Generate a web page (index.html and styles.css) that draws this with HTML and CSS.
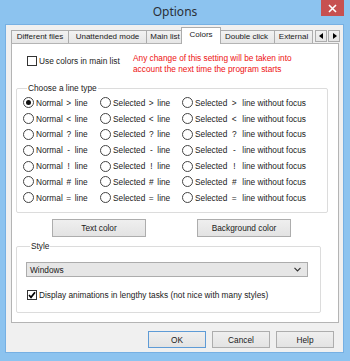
FILE: index.html
```html
<!DOCTYPE html>
<html lang="en">
<head>
  <meta charset="UTF-8" />
  <title>Options</title>
  <link rel="stylesheet" href="styles.css">
</head>
<body>

<div class="titlebar">
  <span></span>
  <div class="title">Options</div>
  <div class="close">
    <svg width="9" height="9" viewBox="0 0 9 9"><path d="M1 1L8 8M8 1L1 8" stroke="#fff" stroke-width="1.6"/></svg>
  </div>
</div>

<div class="client">
  <div class="tabs">
    <div class="tab t1">Different files</div>
    <div class="tab t2">Unattended mode</div>
    <div class="tab t3">Main list</div>
    <div class="tab t4 active">Colors</div>
    <div class="tab t5">Double click</div>
    <div class="tab t6">External</div>
    <div class="arrows">
      <span class="arrow"><svg width="5" height="6" viewBox="0 0 5 6"><path d="M4 0V6L0 3Z" fill="#000"/></svg></span>
      <span class="arrow"><svg width="5" height="6" viewBox="0 0 5 6"><path d="M1 0V6L5 3Z" fill="#000"/></svg></span>
    </div>
  </div>

  <div class="panel">
    <div class="top-row">
      <label class="check"><span class="box"></span>Use colors in main list</label>
      <div class="note">Any change of this setting will be taken into<br>account the next time the program starts</div>
    </div>

    <fieldset class="group lines">
      <legend>Choose a line type</legend>
      <div class="radio-grid" id="radios"></div>
    </fieldset>

    <div class="color-buttons">
      <button class="btn wide">Text color</button>
      <button class="btn wide">Background color</button>
    </div>

    <fieldset class="group style">
      <legend>Style</legend>
      <div class="select">
        <span>Windows</span>
        <svg width="7" height="5" viewBox="0 0 7 5"><path d="M0.5 0.8L3.5 3.8L6.5 0.8" stroke="#333" stroke-width="1.2" fill="none"/></svg>
      </div>
      <label class="check anim">
        <span class="box"><svg width="8" height="8" viewBox="0 0 8 8"><path d="M1 4L3 6.3L7 1.2" stroke="#000" stroke-width="1.7" fill="none"/></svg></span>
        Display animations in lengthy tasks (not nice with many styles)
      </label>
    </fieldset>
  </div>

  <div class="actions">
    <button class="btn default">OK</button>
    <button class="btn">Cancel</button>
    <button class="btn">Help</button>
  </div>
</div>

<script>
const symbols = ['&gt;', '&lt;', '?', '-', '!', '#', '='];
const grid = document.getElementById('radios');

symbols.forEach((s, i) => {
  const cols = [
    ['Normal', 'line', 'c1'],
    ['Selected', 'line', 'c2'],
    ['Selected', 'line without focus', 'c3']
  ];
  cols.forEach(c => {
    let item = document.createElement('div');
    item.className = 'radio ' + c[2];
    item.innerHTML = `<span class="dot${i === 0 && c[2] === 'c1' ? ' on' : ''}"></span>`
      + `${c[0]}<span class="sym">${s}</span>${c[1]}`;
    grid.appendChild(item);
  });
});
</script>

</body>
</html>
```

FILE: styles.css
```css
body {
  margin: 0;
  width: 350px;
  height: 361px;
  background: #8cc3ef;
  font-family: 'Liberation Sans', Arial, sans-serif;
  font-size: 8.3px;
  color: #1a1a1a;
  overflow: hidden;
}
.titlebar {
  height: 25px;
  display: grid;
  grid-template-columns: 1fr auto 1fr;
}
.title {
  font-family: 'Noto Sans', sans-serif;
  font-size: 12px;
  color: #2a2f36;
  line-height: 24px;
}
.close {
  justify-self: end;
  width: 23px;
  height: 16px;
  margin-right: 6px;
  background: #c75050;
  display: flex;
  align-items: center;
  justify-content: center;
}
.client {
  margin-left: 6px;
  width: 337px;
  height: 327px;
  background: #f0f0f0;
  box-shadow: 0 0 0 1px #76b0e3;
}
.tabs {
  height: 18px;
  padding-left: 5px;
  display: flex;
  align-items: flex-end;
  font-size: 8px;
}
.tab {
  height: 12px;
  border: 1px solid #acacac;
  border-bottom: none;
  border-right: none;
  background: linear-gradient(#f2f2f2, #e6e6e6);
  text-align: center;
  line-height: 12px;
  box-sizing: content-box;
  white-space: nowrap;
  overflow: hidden;
}
.t1 { width: 56px; }
.t2 { width: 77px; }
.t3 { width: 36px; }
.t5 { width: 55px; border-left: none; }
.t6 { width: 37px; border-right: 1px solid #acacac; }
.tab.active {
  width: 38px;
  height: 16px;
  margin: 0 -2px -1px;
  background: #fff;
  border-right: 1px solid #acacac;
  line-height: 14px;
  position: relative;
  z-index: 1;
}
.arrows {
  display: flex;
  gap: 1px;
  margin-left: 2px;
  margin-bottom: 1px;
}
.arrow {
  width: 10px;
  height: 10px;
  border: 1px solid #acacac;
  background: linear-gradient(#f2f2f2, #e5e5e5);
  display: flex;
  align-items: center;
  justify-content: center;
}
.panel {
  margin-left: 5px;
  width: 326px;
  height: 278px;
  border: 1px solid #b4b4b4;
  background: #fff;
}
.top-row {
  height: 39px;
  display: grid;
  grid-template-columns: 121px 1fr;
}
.check {
  display: flex;
  align-items: center;
  gap: 2px;
  height: 11px;
}
.top-row .check {
  margin: 11px 0 0 15px;
}
.box {
  width: 8px;
  height: 8px;
  border: 1px solid #333;
  background: #fff;
  display: flex;
  align-items: center;
  justify-content: center;
}
.note {
  color: #ee1111;
  line-height: 11px;
  margin-top: 9px;
}
.group {
  margin: 0 0 0 4px;
  padding: 0;
  border: 1px solid #dcdcdc;
  border-radius: 2px;
  min-inline-size: 0;
}
.group legend {
  margin-left: 4px;
  padding: 0 1px;
  line-height: 10px;
}
.lines {
  width: 312px;
  padding: 2px 0 6px 6px;
  box-sizing: border-box;
  height: 130px;
}
.radio-grid {
  display: grid;
  grid-template-columns: 77px 82px 1fr;
  grid-auto-rows: 15.8px;
}
.radio {
  display: flex;
  align-items: center;
  white-space: nowrap;
}
.dot {
  width: 9px;
  height: 9px;
  border: 1px solid #444;
  border-radius: 50%;
  margin-right: 2px;
  display: flex;
  align-items: center;
  justify-content: center;
}
.dot.on::after {
  content: '';
  width: 5px;
  height: 5px;
  border-radius: 50%;
  background: #111;
}
.sym {
  display: inline-block;
  width: 12px;
  text-align: center;
}
.c3 .sym {
  width: 14px;
  margin-right: 1px;
}
.color-buttons {
  display: flex;
  gap: 51px;
  margin: 6px 0 0 40px;
}
.btn {
  font: inherit;
  height: 17px;
  width: 58px;
  padding: 0;
  border: 1px solid #adadad;
  background: linear-gradient(#efefef, #e3e3e3);
  color: #1a1a1a;
}
.btn.wide {
  width: 94px;
  height: 18px;
}
.style {
  width: 305px;
  height: 72px;
  margin-top: 4px;
  padding: 11px 0 0 9px;
  box-sizing: border-box;
}
.select {
  height: 13px;
  border: 1px solid #acacac;
  background: #e6e6e6;
  display: flex;
  align-items: center;
  justify-content: space-between;
  padding: 0 6px 0 3px;
  box-sizing: content-box;
  width: 271px;
}
.anim {
  margin: 12px 0 0 1px;
}
.actions {
  display: flex;
  justify-content: flex-end;
  gap: 6px;
  padding-right: 9px;
  margin-top: 8px;
}
.btn.default {
  border-color: #5e9bd6;
}
```
